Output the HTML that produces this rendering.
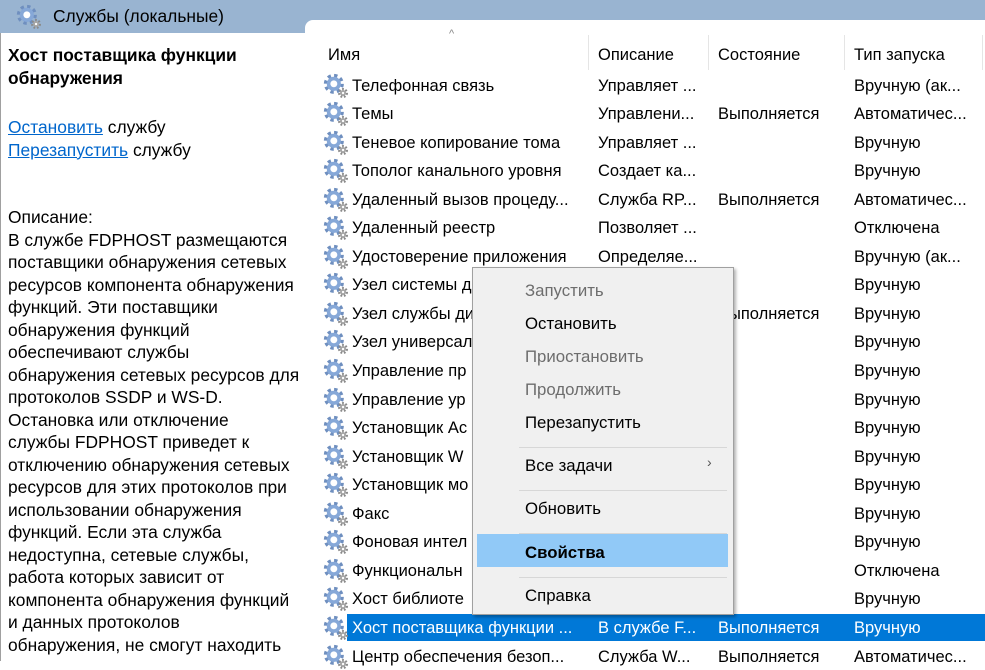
<!DOCTYPE html>
<html><head><meta charset="utf-8"><style>
*{margin:0;padding:0;box-sizing:border-box}
body{width:985px;height:661px;overflow:hidden;background:#fff;font-family:"Liberation Sans","Noto Sans CJK SC",sans-serif;font-size:16.5px;color:#000;position:relative}
.a{position:absolute;white-space:nowrap}
#tb{position:absolute;left:0;top:0;width:985px;height:33px;background:#99b4d1}
#rp{position:absolute;left:305px;top:20px;width:680px;height:641px;background:#fff;border-top-left-radius:8px}
#lp{position:absolute;left:0;top:33px;width:305px;height:628px;background:#fff;border-left:1px solid #a0a0a0}
.lt{font-size:17.4px}
.lnk{color:#0066cc;text-decoration:underline}
.sep{position:absolute;top:35px;width:1px;height:35px;background:#e5e5e5}
.g{position:absolute;width:26px;height:26px}
.sel{position:absolute;left:347px;top:614px;width:638px;height:27px;background:#0078d7}
#cm{position:absolute;left:472px;top:267px;width:262px;height:348px;background:#f0f0f0;border:1px solid #a0a0a0;box-shadow:2px 2px 3px rgba(0,0,0,.3)}
.mi{position:absolute;left:52px;white-space:nowrap;font-size:16.8px}
.dis{color:#6d6d6d}
.ms{position:absolute;left:46px;width:208px;height:1px;background:#d7d7d7}
</style></head><body>
<svg width="0" height="0" style="position:absolute"><defs>
<g id="gear">
<circle cx="10" cy="10" r="7" fill="none" stroke="#6f8fbf" stroke-width="4.5" stroke-dasharray="2.8 2.7"/>
<circle cx="10" cy="10" r="6.5" fill="#86a8d8"/>
<circle cx="10" cy="10" r="3.2" fill="#fff"/>
<circle cx="18.5" cy="18.5" r="3.5" fill="none" stroke="#8a8a8a" stroke-width="2.2" stroke-dasharray="1.6 1.5"/>
<circle cx="18.5" cy="18.5" r="2.8" fill="#a5a5a5"/>
<circle cx="18.5" cy="18.5" r="1.1" fill="#fff"/>
</g></defs></svg>
<div id="tb"></div>
<svg class="g" style="left:16px;top:4px" viewBox="0 0 24 24"><use href="#gear"/></svg>
<div class="a" style="left:53px;top:6px;font-size:17.4px;color:#000">Службы (локальные)</div>
<div id="rp"></div>
<div id="lp"></div>
<div class="a lt" style="left:8px;top:44px;font-weight:bold;line-height:22.5px">Хост поставщика функции<br>обнаружения</div>
<div class="a lt" style="left:8px;top:116px;line-height:22.5px"><span class="lnk">Остановить</span> службу<br><span class="lnk">Перезапустить</span> службу</div>
<div class="a lt" style="left:8px;top:206px;line-height:22.5px">Описание:<br>В службе FDPHOST размещаются<br>поставщики обнаружения сетевых<br>ресурсов компонента обнаружения<br>функций. Эти поставщики<br>обнаружения функций<br>обеспечивают службы<br>обнаружения сетевых ресурсов для<br>протоколов SSDP и WS-D.<br>Остановка или отключение<br>службы FDPHOST приведет к<br>отключению обнаружения сетевых<br>ресурсов для этих протоколов при<br>использовании обнаружения<br>функций. Если эта служба<br>недоступна, сетевые службы,<br>работа которых зависит от<br>компонента обнаружения функций<br>и данных протоколов<br>обнаружения, не смогут находить</div>
<div class="a" style="left:449px;top:28px;font-size:11px;color:#888">^</div>
<div class="a" style="left:328px;top:46px">Имя</div>
<div class="sep" style="left:588px"></div>
<div class="a" style="left:598px;top:46px">Описание</div>
<div class="sep" style="left:708px"></div>
<div class="a" style="left:718px;top:46px">Состояние</div>
<div class="sep" style="left:844px"></div>
<div class="a" style="left:854px;top:46px">Тип запуска</div>
<div class="sep" style="left:982px"></div>
<div class="sel"></div>
<div id="rows"></div>
<script>
var R=[["Телефонная связь","Управляет ...","","Вручную (ак..."],
["Темы","Управлени...","Выполняется","Автоматичес..."],
["Теневое копирование тома","Управляет ...","","Вручную"],
["Тополог канального уровня","Создает ка...","","Вручную"],
["Удаленный вызов процеду...","Служба RP...","Выполняется","Автоматичес..."],
["Удаленный реестр","Позволяет ...","","Отключена"],
["Удостоверение приложения","Определяе...","","Вручную (ак..."],
["Узел системы д","","","Вручную"],
["Узел службы ди","","Выполняется","Вручную"],
["Узел универсал","","","Вручную"],
["Управление пр","","","Вручную"],
["Управление ур","","","Вручную"],
["Установщик Ac","","","Вручную"],
["Установщик W","","","Вручную"],
["Установщик мо","","","Вручную"],
["Факс","","","Вручную"],
["Фоновая интел","","","Вручную"],
["Функциональн","","","Отключена"],
["Хост библиоте","","","Вручную"],
["Хост поставщика функции ...","В службе F...","Выполняется","Вручную"],
["Центр обеспечения безоп...","Служба W...","Выполняется","Автоматичес..."]];
var h="";
R.forEach(function(r,i){var y=76.5+i*28.55;var c=i==19?"color:#fff;":"";
h+='<svg class="g" style="left:323px;top:'+(y-4)+'px" viewBox="0 0 24 24"><use href="#gear"/></svg>';
h+='<div class="a" style="'+c+'left:352px;top:'+y+'px">'+r[0]+'</div>';
h+='<div class="a" style="'+c+'left:598px;top:'+y+'px">'+r[1]+'</div>';
h+='<div class="a" style="'+c+'left:718px;top:'+y+'px">'+r[2]+'</div>';
h+='<div class="a" style="'+c+'left:854px;top:'+y+'px">'+r[3]+'</div>';});
document.getElementById("rows").innerHTML=h;
</script>
<div id="cm">
<div class="mi dis" style="top:13px">Запустить</div>
<div class="mi" style="top:46px">Остановить</div>
<div class="mi dis" style="top:79px">Приостановить</div>
<div class="mi dis" style="top:112px">Продолжить</div>
<div class="mi" style="top:145px">Перезапустить</div>
<div class="ms" style="top:179px"></div>
<div class="mi" style="top:188px">Все задачи</div>
<div class="a" style="left:234px;top:186px;font-size:14px;color:#555">›</div>
<div class="ms" style="top:222px"></div>
<div class="mi" style="top:231px">Обновить</div>
<div class="ms" style="top:265px"></div>
<div style="position:absolute;left:4px;top:266px;width:251px;height:33px;background:#91c9f7"></div>
<div class="mi" style="top:275px;font-weight:bold">Свойства</div>
<div class="ms" style="top:309px"></div>
<div class="mi" style="top:318px">Справка</div>
</div>
</body></html>
